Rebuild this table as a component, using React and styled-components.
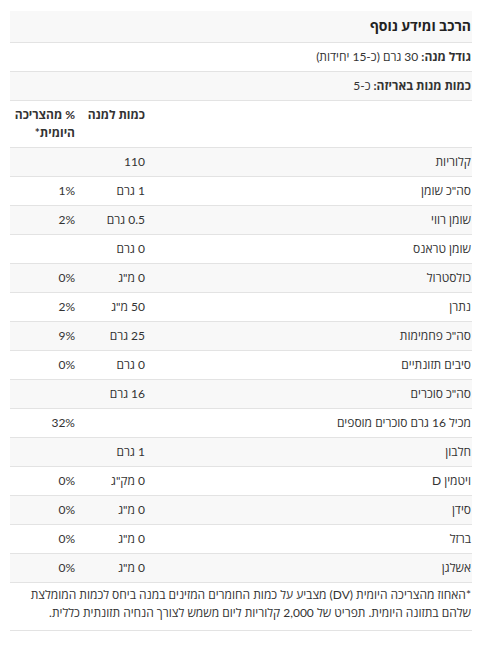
import React from "react";
import styled, { createGlobalStyle } from "styled-components";

const Global = createGlobalStyle`
  html, body { margin: 0; padding: 0; background: #fff; }
  body { font-family: Lato, "Open Sans", sans-serif; color: #333; }
`;

const Wrap = styled.div`
  direction: rtl;
  margin: 11px 10px 0 10px;
  width: 462px;
  font-size: 12px;
  line-height: 18px;
`;

const Row = styled.div`
  display: grid;
  grid-template-columns: 1fr 70px 66px;
  border-bottom: 1px solid #e3e3e3;
  background: ${(p) => (p.$shade ? "#f8f8f8" : "#fff")};
`;

const Cell = styled.div`
  padding: 5px 1px 5px 4px;
  text-align: right;
  font-weight: ${(p) => (p.$bold ? 700 : 400)};
`;

const Full = styled.div`
  padding: ${(p) => (p.$title ? "6px 1px 7px 8px" : "5px 1px 5px 8px")};
  background: ${(p) => (p.$shade ? "#f8f8f8" : "#fff")};
  border-bottom: 1px solid #e3e3e3;
  font-size: ${(p) => (p.$title ? "14px" : "12px")};
  font-weight: ${(p) => (p.$title ? 700 : 400)};
  color: ${(p) => (p.$title ? "#222" : "#333")};
`;

const B = styled.b`
  font-weight: 700;
`;

const Foot = styled.div`
  padding: 3px 1px 8px 4px;
  border-bottom: 1px solid #e3e3e3;
  color: #333;
`;

const rows = [
  ["קלוריות", "110", ""],
  ["סה\"כ שומן", "1 גרם", "1%"],
  ["שומן רווי", "0.5 גרם", "2%"],
  ["שומן טראנס", "0 גרם", ""],
  ["כולסטרול", "0 מ\"ג", "0%"],
  ["נתרן", "50 מ\"ג", "2%"],
  ["סה\"כ פחמימות", "25 גרם", "9%"],
  ["סיבים תזונתיים", "0 גרם", "0%"],
  ["סה\"כ סוכרים", "16 גרם", ""],
  ["מכיל 16 גרם סוכרים מוספים", "", "32%"],
  ["חלבון", "1 גרם", ""],
  ["ויטמין D", "0 מק\"ג", "0%"],
  ["סידן", "0 מ\"ג", "0%"],
  ["ברזל", "0 מ\"ג", "0%"],
  ["אשלגן", "0 מ\"ג", "0%"],
];

export default function App() {
  return (
    <>
      <Global />
      <Wrap>
        <Full $title $shade>הרכב ומידע נוסף</Full>
        <Full>
          <B>גודל מנה:</B> 30 גרם (כ-15 יחידות)
        </Full>
        <Full $shade>
          <B>כמות מנות באריזה:</B> כ-5
        </Full>
        <Row>
          <Cell />
          <Cell $bold>כמות למנה</Cell>
          <Cell $bold>{"%\u00A0מהצריכה היומית*"}</Cell>
        </Row>
        {rows.map((r, i) => (
          <Row key={i} $shade={i % 2 === 0}>
            <Cell>{r[0]}</Cell>
            <Cell>{r[1]}</Cell>
            <Cell>{r[2]}</Cell>
          </Row>
        ))}
        <Foot>
          *האחוז מהצריכה היומית (DV) מצביע על כמות החומרים המזינים במנה ביחס לכמות המומלצת שלהם בתזונה היומית. תפריט של 2,000 קלוריות ליום משמש לצורך הנחיה תזונתית כללית.
        </Foot>
      </Wrap>
    </>
  );
}
